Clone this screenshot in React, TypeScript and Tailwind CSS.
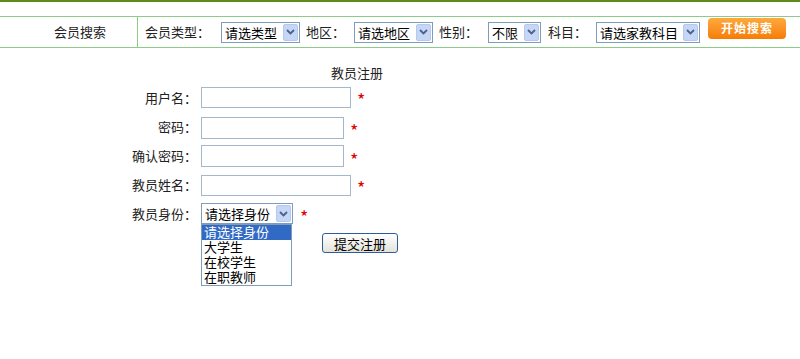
import React from "react";

const font = { fontFamily: '"Noto Sans CJK SC", "Noto Sans", sans-serif' };
const listFont = { fontFamily: '"Liberation Sans", "Noto Sans CJK SC", sans-serif' };

function Chevron() {
  return (
    <svg width="9" height="6" viewBox="0 0 9 6">
      <path d="M1 1 L4.5 4.5 L8 1" fill="none" stroke="#4d6185" strokeWidth="1.8" />
    </svg>
  );
}

function FakeSelect({ label, width }: { label: string; width: string }) {
  return (
    <div className={`flex h-[21px] items-stretch border border-[#7f9db9] bg-white ${width}`}>
      <span className="flex flex-1 items-center overflow-hidden pl-[3px] text-[13px] leading-none text-black whitespace-nowrap">
        {label}
      </span>
      <span className="m-[1px] flex w-[15px] shrink-0 items-center justify-center rounded-[2px] border border-[#b4c8f0] bg-[#c6d6f7]">
        <Chevron />
      </span>
    </div>
  );
}

function Star() {
  return <span className="text-[18px] leading-none text-[#e00000]">*</span>;
}

function Row({
  label,
  children,
}: {
  label: string;
  children: React.ReactNode;
}) {
  return (
    <div className="flex h-[29px] items-center">
      <span className="w-[201px] pr-[4px] text-right text-[13px] text-[#222]">{label}</span>
      {children}
    </div>
  );
}

export default function App() {
  return (
    <div className="h-[359px] w-[800px] bg-white" style={font}>
      <div className="h-[2px] bg-[#5e8b1e]" />
      <div className="mt-[14px] flex h-[32px] border-y border-[#8ccb88]">
        <div className="flex w-[138px] items-center border-r border-[#8ccb88] pl-[54px] text-[13px] text-[#222]">
          会员搜索
        </div>
        <div className="flex items-center pl-[7px] text-[13px] text-[#222]">
          <span className="w-[76px]">会员类型：</span>
          <FakeSelect label="请选类型" width="w-[79px]" />
          <span className="ml-[6px] w-[48px]">地区：</span>
          <FakeSelect label="请选地区" width="w-[79px]" />
          <span className="ml-[6px] w-[49px]">性别：</span>
          <FakeSelect label="不限" width="w-[53px]" />
          <span className="ml-[7px] w-[48px]">科目：</span>
          <FakeSelect label="请选家教科目" width="w-[104px]" />
          <button className="ml-[8px] -mt-[8px] h-[21px] w-[78px] rounded-[4px] bg-gradient-to-b from-[#ffa93a] to-[#f57c00] text-[12px] font-bold tracking-[1px] text-white">
            开始搜索
          </button>
        </div>
      </div>

      <div className="pt-[15px] text-[13px] text-[#222]">
        <div className="h-[20px] pl-[331px] leading-[20px]">教员注册</div>
        <Row label="用户名：">
          <div className="h-[21px] w-[150px] border border-[#a5b8cb]" />
          <span className="ml-[6px] mt-[6px]"><Star /></span>
        </Row>
        <Row label="密码：">
          <div className="mt-[2px] h-[22px] w-[143px] border border-[#a5b8cb]" />
          <span className="ml-[6px] mt-[10px]"><Star /></span>
        </Row>
        <Row label="确认密码：">
          <div className="h-[22px] w-[143px] border border-[#a5b8cb]" />
          <span className="ml-[6px] mt-[10px]"><Star /></span>
        </Row>
        <Row label="教员姓名：">
          <div className="mt-[2px] h-[21px] w-[150px] border border-[#a5b8cb]" />
          <span className="ml-[6px] mt-[8px]"><Star /></span>
        </Row>
        <div className="relative flex h-[29px] items-center">
          <span className="w-[201px] pr-[4px] text-right text-[13px] text-[#222]">教员身份：</span>
          <FakeSelect label="请选择身份" width="w-[92px]" />
          <span className="ml-[7px] mt-[8px]"><Star /></span>
          <div
            className="absolute left-[201px] top-[25px] w-[91px] border border-[#7f9db9] bg-white text-[13px] text-black"
            style={listFont}
          >
            <div className="h-[15px] bg-[#316ac5] pl-[2px] leading-[15px] text-white">请选择身份</div>
            <div className="h-[15px] pl-[2px] leading-[15px]">大学生</div>
            <div className="h-[15px] pl-[2px] leading-[15px]">在校学生</div>
            <div className="h-[15px] pl-[2px] leading-[15px]">在职教师</div>
          </div>
        </div>
        <div className="flex pl-[322px] pt-[5px]">
          <button className="h-[20px] w-[76px] rounded-[3px] border border-[#2c5d9a] bg-gradient-to-b from-white to-[#e4e2d9] text-[13px] leading-none text-black">
            提交注册
          </button>
        </div>
      </div>
    </div>
  );
}
